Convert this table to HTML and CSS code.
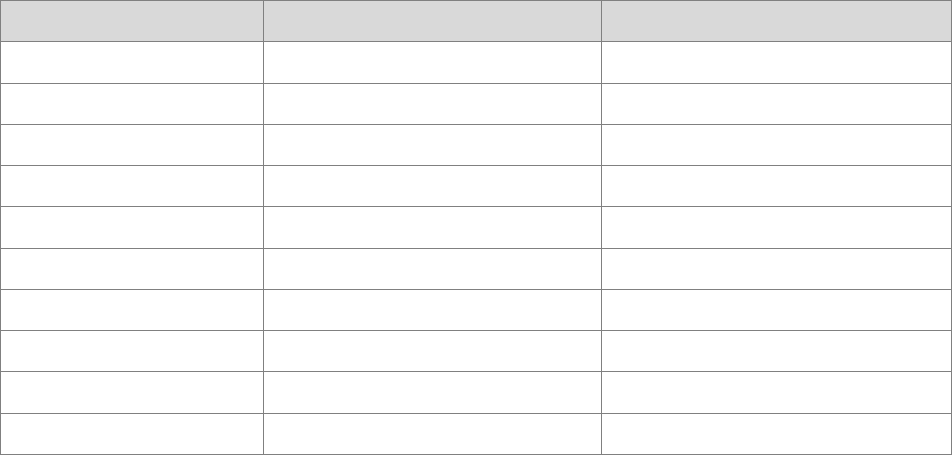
FILE: index.html
```html
<!DOCTYPE html>
<html>
<head>
<meta charset="utf-8">
<link rel="stylesheet" href="styles.css">
</head>
<body>
<div class="grid" role="table">
  <div class="cell head" role="columnheader"></div><div class="cell head" role="columnheader"></div><div class="cell head" role="columnheader"></div>
  <div class="cell"></div><div class="cell"></div><div class="cell"></div>
  <div class="cell"></div><div class="cell"></div><div class="cell"></div>
  <div class="cell"></div><div class="cell"></div><div class="cell"></div>
  <div class="cell"></div><div class="cell"></div><div class="cell"></div>
  <div class="cell"></div><div class="cell"></div><div class="cell"></div>
  <div class="cell"></div><div class="cell"></div><div class="cell"></div>
  <div class="cell"></div><div class="cell"></div><div class="cell"></div>
  <div class="cell"></div><div class="cell"></div><div class="cell"></div>
  <div class="cell"></div><div class="cell"></div><div class="cell"></div>
  <div class="cell"></div><div class="cell"></div><div class="cell"></div>
</div>
</body>
</html>
```
FILE: styles.css
```css
html, body {
  margin: 0;
  padding: 0;
  background: #ffffff;
  font-family: "Liberation Sans", Arial, sans-serif;
}
.grid {
  display: grid;
  grid-template-columns: 263px 338px 350px;
  grid-template-rows: repeat(11, 1fr);
  width: 951px;
  height: 454px;
  border-top: 1px solid #808080;
  border-left: 1px solid #808080;
}
.cell {
  border-right: 1px solid #808080;
  border-bottom: 1px solid #808080;
  background: #ffffff;
}
.head {
  background: #d9d9d9;
}
```
